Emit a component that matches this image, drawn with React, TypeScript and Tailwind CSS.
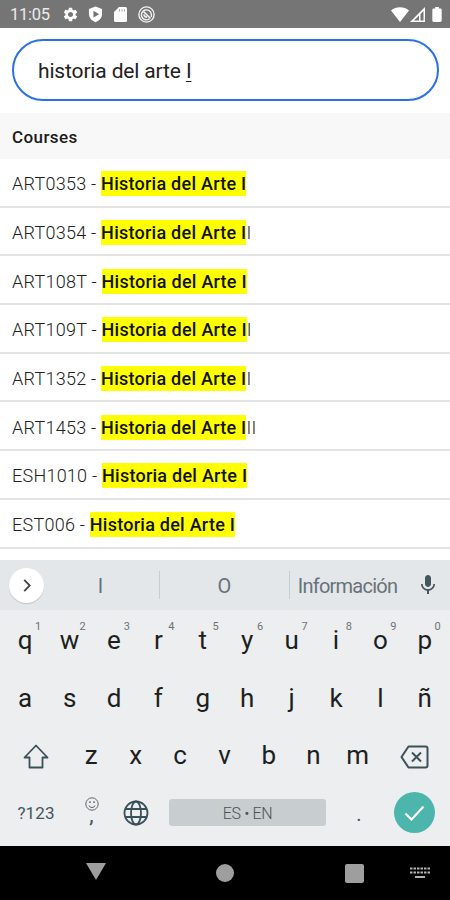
import React, { useState } from "react"
import { MdSettings, MdMic } from "react-icons/md"

interface Course {
  id: number
  code: string
  match: string
  rest: string
}

const courses: Course[] = [
  { id: 1, code: "ART0353", match: "Historia del Arte I", rest: "" },
  { id: 2, code: "ART0354", match: "Historia del Arte I", rest: "I" },
  { id: 3, code: "ART108T", match: "Historia del Arte I", rest: "" },
  { id: 4, code: "ART109T", match: "Historia del Arte I", rest: "I" },
  { id: 5, code: "ART1352", match: "Historia del Arte I", rest: "I" },
  { id: 6, code: "ART1453", match: "Historia del Arte I", rest: "II" },
  { id: 7, code: "ESH1010", match: "Historia del Arte I", rest: "" },
  { id: 8, code: "EST006", match: "Historia del Arte I", rest: "" },
]

const topKeys = ["q", "w", "e", "r", "t", "y", "u", "i", "o", "p"]
const middleKeys = ["a", "s", "d", "f", "g", "h", "j", "k", "l", "ñ"]
const bottomKeys = ["z", "x", "c", "v", "b", "n", "m"]

function StatusBar() {
  return (
    <div className="flex h-7 shrink-0 items-center bg-[#757575] pl-[10px] pr-[7px] text-white">
      <span className="w-[52px] pt-[2px] text-[16.5px] leading-[26px] tracking-[-0.25px] text-[#ececec]">11:05</span>
      <MdSettings className="mr-[9px] size-[17px]" />
      {/* Play Protect shield */}
      <svg viewBox="0 0 16 18" className="mr-[11px] h-[17px] w-[15px]">
        <path d="M8 .5 15 3v5.500c0 4-3 7.200-7 8.800-4-1.600-7-4.800-7-8.800V3z" fill="#fff" />
        <path d="M5.800 5v7.200L12 8.600z" fill="#757575" />
      </svg>
      <svg viewBox="0 0 13 15" className="mr-[11px] h-[15px] w-[13px]">
        <path d="M5 0h6.500A1.500 1.500 0 0 1 13 1.500v12a1.500 1.500 0 0 1-1.500 1.500h-10A1.500 1.500 0 0 1 0 13.500V5z" fill="#fff" />
        <path d="M5.500 2.200v2.500M8 2.200v2.500M10.500 2.200v2.500" stroke="#b0b0b0" strokeWidth="1" />
      </svg>
      <svg viewBox="0 0 17 17" className="size-[17px]" fill="none" stroke="#f2f2f2">
        <circle cx="8.500" cy="8.500" r="7.600" strokeWidth="1.400" />
        <path d="M11.500 12.800A5 5 0 1 1 13.400 8.500V11" strokeWidth="1.400" />
        <path d="M5.500 5.500l7 7M6 8.500a2.700 2.700 0 0 0 3 2.600" strokeWidth="1.700" />
      </svg>
      <div className="ml-auto flex items-center">
        <svg viewBox="0 0 18 15" className="h-[15px] w-[18px]">
          <path d="M0 3.500C5-.9 13-.9 18 3.500L9 15z" fill="#fff" />
        </svg>
        <svg viewBox="0 0 15 15" className="ml-[1px] mr-[7px] size-[15px]">
          <path d="M15 0v15H0z" fill="#fff" />
          <path d="M13.500 4V13.500H10.500V7zM9 8.500V13.500H4z" fill="#757575" />
        </svg>
        <svg viewBox="0 0 10 16" className="mr-[1px] h-[15px] w-[10px]">
          <path d="M3 0h4v1.500h1.500A1.500 1.500 0 0 1 10 3v11.500A1.500 1.500 0 0 1 8.500 16h-7A1.500 1.500 0 0 1 0 14.500V3a1.500 1.500 0 0 1 1.500-1.500H3z" fill="#fff" />
        </svg>
      </div>
    </div>
  )
}

function CourseRow({ course }: { course: Course }) {
  return (
    <li className="flex h-[48.7px] items-center whitespace-pre border-b-2 border-[#e2e3e3] pl-3 pt-[3px] text-[18px] text-[#222]">
      <span className="font-light tracking-[0.25px]">{course.code} - </span>
      <mark className="h-[25px] bg-[#ffff00] font-medium leading-[26px] tracking-[0.25px] text-[#111]">
        {course.match}
      </mark>
      <span className="font-light tracking-[0.2px]">{course.rest}</span>
    </li>
  )
}

function Suggestions() {
  return (
    <div className="flex h-[50px] items-center bg-[#e4e7e9] text-[20px] text-[#687378]">
      <button className="ml-[9px] flex size-[35px] items-center justify-center rounded-full bg-white shadow-[0_1px_1px_rgba(0,0,0,0.15)]">
        <svg viewBox="0 0 8 14" className="h-[13px] w-[8px]" fill="none" stroke="#444" strokeWidth="2">
          <path d="M1 1l6 6-6 6" />
        </svg>
      </button>
      <span className="ml-[-2px] w-[117px] pt-[2px] text-center">I</span>
      <span className="h-7 w-px bg-[#c9cdcf]" />
      <span className="w-[129px] pt-[2px] text-center">O</span>
      <span className="h-7 w-px bg-[#c9cdcf]" />
      <span className="w-[115px] pt-[2px] text-center tracking-[-0.75px]">Información</span>
      <MdMic className="ml-[11px] size-6 text-[#44565d]" />
    </div>
  )
}

function Keyboard() {
  return (
    <div className="flex h-[286px] shrink-0 flex-col bg-[#eceef0] text-[26px] text-[#1c1f20]">
      <Suggestions />
      <div className="grid h-[59px] grid-cols-10 px-[3px]">
        {topKeys.map((key, idx) => (
          <button key={key} className="relative leading-[61px]">
            {key}
            <sup className="absolute left-[32px] top-[11px] text-[11px] leading-3 text-[#6d7476]">
              {(idx + 1) % 10}
            </sup>
          </button>
        ))}
      </div>
      <div className="grid h-[58px] grid-cols-10 px-[3px]">
        {middleKeys.map((key) => (
          <button key={key} className="leading-[55px]">{key}</button>
        ))}
      </div>
      <div className="flex h-[57px] items-center">
        <button className="flex w-[69px] justify-center pl-[3px] pt-px">
          <svg viewBox="0 0 26 25" className="h-[25px] w-[26px]" fill="none" stroke="#3b5058" strokeWidth="1.800">
            <path d="M13 1.500 24.500 13.500H19.500V23.500H6.500V13.500H1.500z" strokeLinejoin="round" />
          </svg>
        </button>
        <div className="grid w-[311px] grid-cols-7">
          {bottomKeys.map((key) => (
            <button key={key} className="pb-[2px] leading-[52px]">{key}</button>
          ))}
        </div>
        <button className="flex w-[68px] justify-center pt-[2px]">
          <svg viewBox="0 0 29 24" className="h-6 w-[29px]" fill="none" stroke="#3b5058" strokeWidth="2">
            <path d="M8.500 1.500H25.500A2 2 0 0 1 27.500 3.500V20.500A2 2 0 0 1 25.500 22.500H8.500L1.500 12z" strokeLinejoin="round" />
            <path d="M12 7.500l9 9M21 7.500l-9 9" />
          </svg>
        </button>
      </div>
      <div className="flex h-[57px] items-center text-[#44565d]">
        <button className="w-[69px] pl-[3px] pt-[2px] text-[17px] tracking-[0.1px]">?123</button>
        <button className="flex w-[45px] flex-col items-center">
          <svg viewBox="0 0 14 14" className="size-[14px]" fill="none" stroke="#62686b" strokeWidth="1">
            <circle cx="7" cy="7" r="6.200" />
            <path d="M4 8.500a3.200 3.200 0 0 0 6 0" />
            <path d="M4 5.200h2M8 5.200h2" strokeWidth="1.300" />
          </svg>
          <span className="h-[17px] text-[22px] leading-[7px]">,</span>
        </button>
        <button className="flex w-[43px] justify-center">
          <svg viewBox="0 0 26 26" className="size-[26px]" fill="none" stroke="#38505a" strokeWidth="1.800">
            <circle cx="13" cy="13" r="11.500" />
            <ellipse cx="13" cy="13" rx="5" ry="11.500" />
            <path d="M2.500 9h21M2.500 17h21" />
          </svg>
        </button>
        <button className="ml-[12px] h-[27px] w-[157px] rounded-[3px] bg-[#c8cdd0] pt-[2px] text-[16px] font-light tracking-[-0.35px] text-[#4b5356]">
          ES • EN
        </button>
        <button className="w-[66px] pt-[3px] text-[20px]">.</button>
        <button className="ml-[2px] flex size-[41px] items-center justify-center rounded-full bg-[#4db6ac]">
          <svg viewBox="0 0 21 16" className="h-4 w-[21px]" fill="none" stroke="#fff" strokeWidth="2.200">
            <path d="M1.500 8.500l6 6L19.500 1.500" />
          </svg>
        </button>
      </div>
    </div>
  )
}

function NavBar() {
  return (
    <div className="flex h-[54px] shrink-0 items-center bg-black">
      <svg viewBox="0 0 20 17" className="mb-[3px] ml-[86px] h-[17px] w-5">
        <path d="M0 0h20L10 17z" fill="#9e9e9e" />
      </svg>
      <span className="ml-[110px] size-[18px] rounded-full bg-[#9e9e9e]" />
      <span className="ml-[111px] size-[19px] rounded-[2px] bg-[#9e9e9e]" />
      <svg viewBox="0 0 20 12" className="ml-[46px] h-3 w-5" stroke="#b4b4b4" strokeWidth="2">
        <path d="M0 1.500h20M0 5.500h20" strokeDasharray="2.500 1" />
        <path d="M5 10h10" />
      </svg>
    </div>
  )
}

export default function App() {
  const [query] = useState("historia del arte I")

  return (
    <div className="flex h-[900px] w-[450px] flex-col overflow-hidden bg-white font-[Roboto,sans-serif]">
      <StatusBar />

      {/* Search box */}
      <div className="shrink-0 px-3 pb-3 pt-[11px]">
        <label className="flex h-[62px] w-[427px] items-center rounded-full border-2 border-[#2a70e8] pl-6 pt-[3px] text-[21px] tracking-[-0.15px] text-[#222]">
          <span className="whitespace-pre">{query.slice(0, -1)}</span>
          <span className="underline decoration-1 underline-offset-[3px]">{query.slice(-1)}</span>
        </label>
      </div>

      {/* Results */}
      <div className="min-h-0 flex-1 overflow-hidden">
        <h2 className="h-[46px] bg-[#f8f8f8] pl-3 text-[17px] font-medium leading-[48px] tracking-[0.4px] text-[#1c1c1c]">
          Courses
        </h2>
        <ul>
          {courses.map((course) => (
            <CourseRow key={course.id} course={course} />
          ))}
        </ul>
      </div>

      <Keyboard />
      <NavBar />
    </div>
  )
}
